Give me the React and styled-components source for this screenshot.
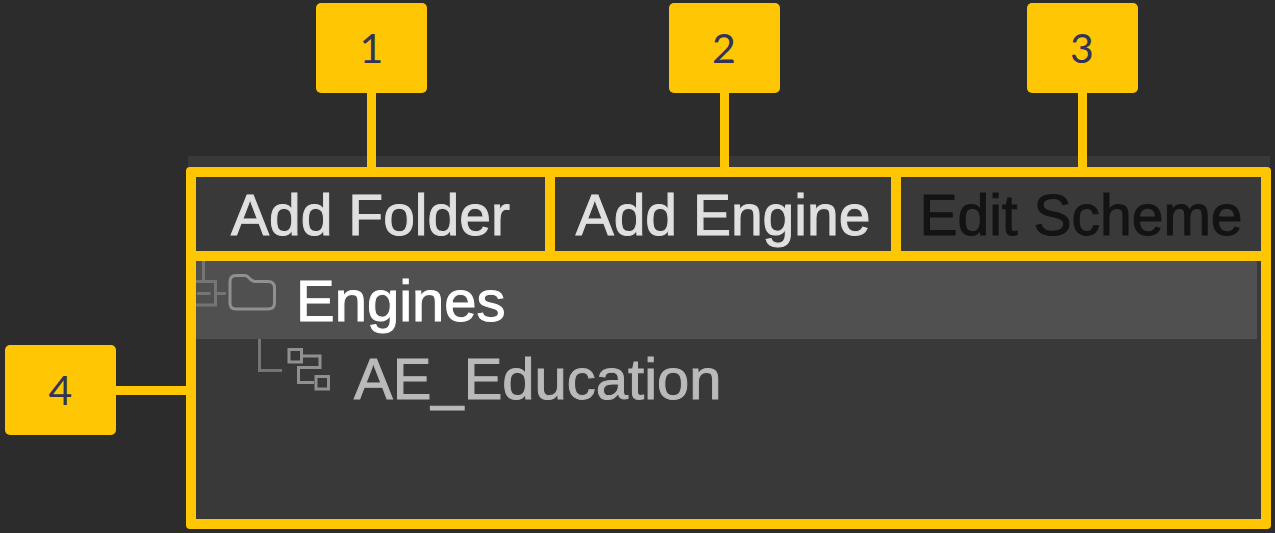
import React from "react";
import styled, { createGlobalStyle } from "styled-components";

const accent = "#ffc603";

const GlobalStyle = createGlobalStyle`
  body {
    margin: 0;
    background: #2c2c2c;
    font-family: "Liberation Sans", Arial, sans-serif;
  }
`;

const Page = styled.main`
  display: grid;
  grid-template-columns: 181px 1fr;
  padding: 3px 4px 4px 5px;
`;

const SideCallouts = styled.div`
  padding-top: 342px;
`;

const Callout = styled.div`
  display: flex;
  flex-direction: ${(p) => (p.$side ? "row" : "column")};
  align-items: center;
`;

const CalloutNumber = styled.span`
  flex: none;
  width: 111px;
  height: 90px;
  border-radius: 5px;
  background: ${accent};
  color: #33335a;
  font: 41px/90px Lato, sans-serif;
  text-align: center;
`;

const CalloutStem = styled.span`
  width: ${(p) => (p.$side ? "70px" : "9px")};
  height: ${(p) => (p.$side ? "9px" : "74px")};
  background: ${accent};
`;

const columns = "349fr 336fr 360fr";

const TopCallouts = styled.div`
  position: relative;
  z-index: 1;
  display: grid;
  grid-template-columns: ${columns};
  gap: 10px;
  padding: 0 9px 0 11px;
`;

const PanelEdge = styled.div`
  height: 11px;
  margin: -11px 1px 0 2px;
  background: #393939;
`;

const Panel = styled.section`
  border: 10px solid ${accent};
  border-radius: 4px;
  background: #393939;
`;

const Toolbar = styled.div`
  display: grid;
  grid-template-columns: ${columns};
  gap: 10px;
  background: ${accent};
  border-bottom: 10px solid ${accent};
`;

const ToolButton = styled.button`
  height: 74px;
  padding: 2px 0 0;
  border: 0;
  background: #393939;
  color: #e0e0e0;
  font: 57px/72px "Liberation Sans", Arial, sans-serif;
  -webkit-text-stroke: 1px currentColor;
  text-align: center;
  white-space: nowrap;

  &:disabled {
    color: #131313;
  }
`;

const Tree = styled.ul`
  min-height: 258px;
  margin: 0;
  padding: 0;
  list-style: none;
`;

const TreeRow = styled.li`
  display: flex;
  height: 78px;
  margin-right: 4px;
  background: ${(p) => (p.$selected ? "#505050" : "transparent")};
  color: ${(p) => (p.$selected ? "#ffffff" : "#bababa")};
`;

const Drawing = styled.svg`
  flex: none;
  fill: none;
  stroke: ${(p) => (p.$guide ? "#757575" : "#909090")};
  stroke-width: 3;
`;

const RowLabel = styled.span`
  padding: 2px 0 0 20px;
  font-size: 58px;
  line-height: 76px;
  -webkit-text-stroke: 1px currentColor;
  white-space: nowrap;
`;

function NumberedCallout({ number, side }) {
  return (
    <Callout $side={side}>
      <CalloutNumber>{number}</CalloutNumber>
      <CalloutStem $side={side} />
    </Callout>
  );
}

export default function App() {
  return (
    <>
      <GlobalStyle />
      <Page>
        <SideCallouts>
          <NumberedCallout number={4} side />
        </SideCallouts>
        <div>
          <TopCallouts>
            <NumberedCallout number={1} />
            <NumberedCallout number={2} />
            <NumberedCallout number={3} />
          </TopCallouts>
          <PanelEdge />
          <Panel>
            <Toolbar role="toolbar" aria-label="Engine actions">
              <ToolButton type="button">Add Folder</ToolButton>
              <ToolButton type="button">Add Engine</ToolButton>
              <ToolButton type="button" disabled>Edit Scheme</ToolButton>
            </Toolbar>
            <Tree role="tree" aria-label="Engines">
              <TreeRow role="treeitem" aria-selected="true" aria-level={1} $selected>
                <Drawing $guide width="32" height="78" viewBox="0 0 32 78" aria-hidden="true">
                  <path d="M7.5 0V20M0 20.5H19.5V44H0M1 32.5H14.5M21 32.5H30" />
                </Drawing>
                <Drawing width="48" height="78" viewBox="0 0 48 78" aria-hidden="true">
                  <path d="M8 14.5H17C21 14.5 22 20.5 27 20.5H40Q46.5 20.5 46.5 27V42Q46.5 48 40 48H8Q2 48 2 42V20.5Q2 14.5 8 14.5Z" />
                </Drawing>
                <RowLabel>Engines</RowLabel>
              </TreeRow>
              <TreeRow role="treeitem" aria-selected="false" aria-level={2}>
                <Drawing $guide width="90" height="78" viewBox="0 0 90 78" aria-hidden="true">
                  <path d="M63.5 0V31.5H86" />
                </Drawing>
                <Drawing width="48" height="78" viewBox="0 0 48 78" aria-hidden="true">
                  <path d="M3 10.5H15.5V23H3ZM17 17H34V28.5H12.5V43.5H28M30 37.5H42.5V50H30Z" />
                </Drawing>
                <RowLabel>AE_Education</RowLabel>
              </TreeRow>
            </Tree>
          </Panel>
        </div>
      </Page>
    </>
  );
}
